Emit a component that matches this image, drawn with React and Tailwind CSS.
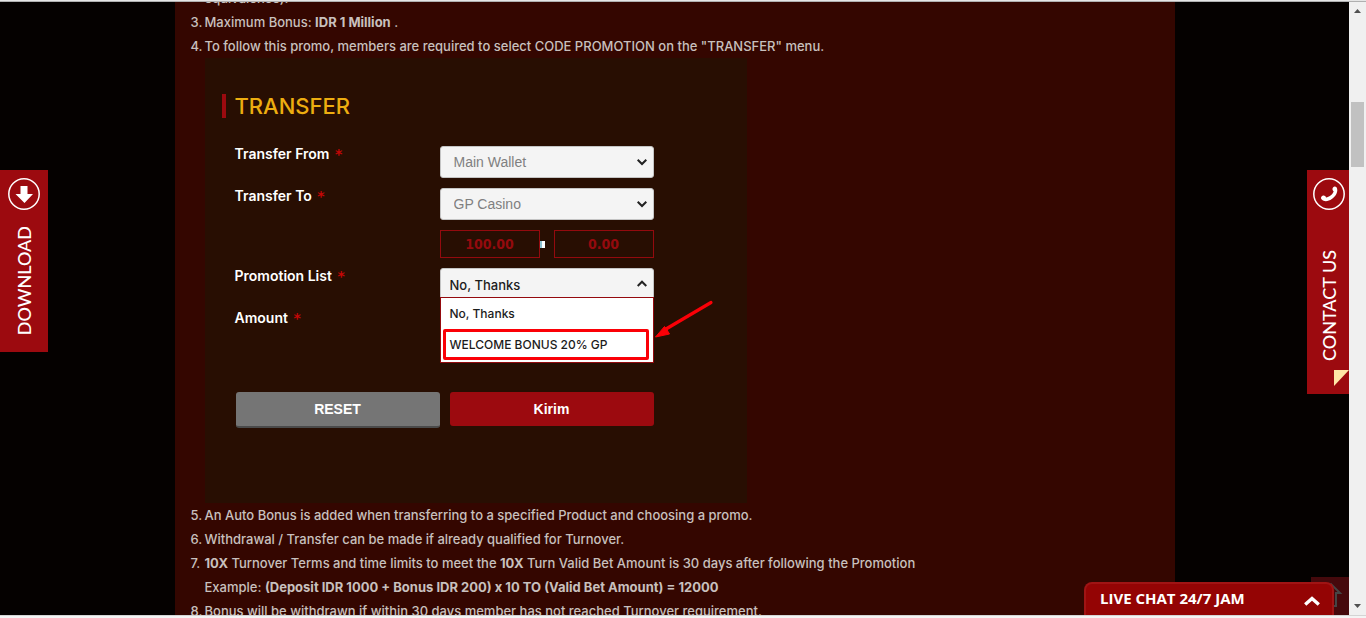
import React, { useState } from 'react';
import clsx from 'clsx';

const transferFields = [
    { id: 'transfer-from', label: 'Transfer From', value: 'Main Wallet' },
    { id: 'transfer-to', label: 'Transfer To', value: 'GP Casino' }
];

const promotions = ['No, Thanks', 'WELCOME BONUS 20% GP'];

function Chevron({ up }) {
    return (
        <svg className="pointer-events-none absolute right-[7px] top-[12px] h-2 w-2.5" viewBox="0 0 10 8" fill="none" stroke="#222" strokeWidth="2" aria-hidden="true">
            <path d={up ? 'M0.7 6 L5 1.7 L9.3 6' : 'M0.7 1.7 L5 6 L9.3 1.7'} />
        </svg>
    );
}

function Required() {
    return <span className="ml-0.5 font-['DejaVu_Sans',sans-serif] font-bold text-[#c40606]">*</span>;
}

function FieldLabel({ htmlFor, children }) {
    return (
        <label htmlFor={htmlFor} className="text-sm leading-4 font-semibold text-white">
            {children} <Required />
        </label>
    );
}

function Term({ number, children }) {
    return (
        <li className="flex">
            <span className="w-3.5 shrink-0 whitespace-nowrap">{number}.</span>
            <div className="min-w-0 flex-1">{children}</div>
        </li>
    );
}

function TransferForm() {
    const [promo, setPromo] = useState(promotions[0]);

    return (
        <form className="h-[445px] w-full max-w-[542px] bg-[#280e02] pl-[17px] pt-9" onSubmit={(e) => e.preventDefault()}>
            <h2 className="border-l-4 border-[#9c0a0f] pl-[9px] text-[22px] leading-6 font-medium text-[#edad10]">TRANSFER</h2>

            <div className="ml-[13px] mt-7 grid grid-cols-[205px_214px] gap-y-2.5">
                {transferFields.map((field) => (
                    <React.Fragment key={field.id}>
                        <FieldLabel htmlFor={field.id}>{field.label}</FieldLabel>
                        <div className="relative h-8">
                            <select
                                id={field.id}
                                className="h-8 w-full appearance-none rounded-[3px] border border-[#c4c4c4] bg-[#f4f4f4] pl-[13px] font-['Liberation_Sans',Arial,sans-serif] text-sm text-[#808080]"
                            >
                                <option>{field.value}</option>
                            </select>
                            <Chevron />
                        </div>
                    </React.Fragment>
                ))}

                {/* wallet balances */}
                <div className="col-start-2 flex h-7 items-center font-['DejaVu_Sans_Condensed','DejaVu_Sans',Verdana,sans-serif] text-sm font-bold text-[#940a0e]">
                    <output className="flex h-7 w-[100px] items-center justify-center border border-[#940a0e]">100.00</output>
                    <span className="mr-[9px] h-[7px] w-[5px] border-l-2 border-[#8cc0d0] bg-white"></span>
                    <output className="flex h-7 w-[100px] items-center justify-center border border-[#940a0e]">0.00</output>
                </div>

                <FieldLabel htmlFor="promotion">Promotion List</FieldLabel>
                <div className="relative h-8">
                    <select
                        id="promotion"
                        value={promo}
                        onChange={(e) => setPromo(e.target.value)}
                        className="h-8 w-full appearance-none rounded-t-[3px] border border-[#c4c4c4] bg-[#f4f4f4] pl-[9px] pt-0.5 text-[13px] text-[#1c1c1c]"
                    >
                        {promotions.map((name) => <option key={name}>{name}</option>)}
                    </select>
                    <Chevron up />
                    <ul role="listbox" aria-label="Promotion List" className="absolute inset-x-0 top-[29px] z-10 border border-[#940a0e] bg-white text-xs text-[#1c1c1c]">
                        {promotions.map((name, i) => (
                            <li
                                key={name}
                                role="option"
                                aria-selected={name === promo}
                                onClick={() => setPromo(name)}
                                className={clsx(
                                    'flex cursor-pointer items-center',
                                    i === 0 ? 'h-[31px] px-[9px]' : 'mb-0.5 ml-0.5 mr-1 h-[31px] rounded-xs border-[3px] border-[#fb0007] px-1'
                                )}
                            >
                                {name}
                            </li>
                        ))}
                    </ul>
                    {/* pointer to the bonus option */}
                    <svg className="absolute left-[214px] top-8 h-10 w-[60px]" viewBox="0 0 60 40" aria-hidden="true">
                        <path d="M57 2.5 L12 29" stroke="#fb0007" strokeWidth="3.2" strokeLinecap="round" />
                        <path d="M1.5 37 L10.5 26.5 L12.5 29 L15.5 34 Z" fill="#fb0007" stroke="#fb0007" strokeLinejoin="round" />
                    </svg>
                </div>

                <div className="h-8 leading-4">
                    <span className="text-sm leading-4 font-semibold text-white">
                        Amount <Required />
                    </span>
                </div>
            </div>

            <div className="ml-3.5 mt-[50px] flex gap-2.5 font-['Liberation_Sans',Arial,sans-serif] text-sm font-bold text-white">
                <button type="reset" className="h-9 w-[204px] rounded-[3px] border-b-2 border-[#4a4a4a] bg-[#757575]">RESET</button>
                <button type="submit" className="h-[34px] w-[204px] rounded-[3px] bg-[#9c0a0f]">Kirim</button>
            </div>
        </form>
    );
}

export default function App() {
    return (
        <div className="flex h-screen flex-col overflow-hidden bg-[#f0f0f0] font-['Inter',sans-serif]">
            <div className="h-0.5 shrink-0 border-b border-[#b0b0b0] bg-[#e6e6e6]"></div>

            <div className="flex min-h-0 flex-1">
                <div className="relative min-w-0 flex-1 overflow-hidden bg-[#050100]">
                    <main className="mx-auto h-full max-w-[1000px] overflow-hidden bg-[#340600] px-4 text-[#c8c0be]">
                        <ol className="-mt-4 text-[13px] leading-6 font-medium">
                            <li className="pl-3.5">equivalence).</li>
                            <Term number={3}>Maximum Bonus: <b>IDR 1 Million</b> .</Term>
                            <Term number={4}>
                                To follow this promo, members are required to select CODE PROMOTION on the "TRANSFER" menu.
                                <TransferForm />
                            </Term>
                            <Term number={5}>An Auto Bonus is added when transferring to a specified Product and choosing a promo.</Term>
                            <Term number={6}>Withdrawal / Transfer can be made if already qualified for Turnover.</Term>
                            <Term number={7}>
                                <p><b>10X</b> Turnover Terms and time limits to meet the <b>10X</b> Turn Valid Bet Amount is 30 days after following the Promotion</p>
                                <p>Example: <b>(Deposit IDR 1000 + Bonus IDR 200) x 10 TO (Valid Bet Amount) = 12000</b></p>
                            </Term>
                            <Term number={8}>Bonus will be withdrawn if within 30 days member has not reached Turnover requirement.</Term>
                        </ol>
                    </main>

                    {/* side tabs */}
                    <a href="#download" className="absolute left-0 top-[168px] flex h-[182px] w-12 flex-col items-center bg-[#9c0a0f] pt-2 text-white">
                        <svg className="size-8" viewBox="0 0 32 32" aria-hidden="true">
                            <circle cx="16" cy="16" r="15.2" fill="none" stroke="#fff" strokeWidth="1.5" />
                            <path d="M12.5 8 H19.5 V16 H25 L16.5 25 L7.5 16 H12.5 Z" fill="#fff" />
                        </svg>
                        <span className="mt-4 rotate-180 font-['Lato',sans-serif] text-lg leading-6 font-medium [writing-mode:vertical-rl]">DOWNLOAD</span>
                    </a>
                    <a href="#contact" className="absolute right-0 top-[168px] flex h-56 w-[42px] flex-col items-center bg-[#9c0a0f] pl-0.5 pt-2 text-white">
                        <svg className="size-8" viewBox="0 0 32 32" aria-hidden="true">
                            <circle cx="16" cy="16" r="15.2" fill="none" stroke="#fff" strokeWidth="1.5" />
                            <path d="M20.2 9.2 C21.2 8.1 22.7 8.4 23.7 9.4 C25.7 13.5 22.5 18.5 18.8 21 C15.5 23.3 11.5 24.2 8.7 21.6 C7.5 20.3 7.9 18.6 9.5 17.8 C11 17.1 12.3 17.8 13.1 19.4 C16 19.3 19.5 16.5 20.7 13.5 C19.3 12.2 19 10.6 20.2 9.2 Z" fill="#fff" />
                        </svg>
                        <span className="mt-10 rotate-180 font-['Lato',sans-serif] text-lg leading-6 font-medium [writing-mode:vertical-rl]">CONTACT US</span>
                        <svg className="absolute right-0 top-[200px] h-4 w-[15px]" viewBox="0 0 15 16" aria-hidden="true">
                            <path d="M0 0 H15 L0 16 Z" fill="#ffe6a6" />
                        </svg>
                    </a>

                    {/* back to top, half hidden by the chat bar */}
                    <a href="#top" aria-label="Back to top" className="absolute bottom-0 right-0 h-[38px] w-[38px] bg-[#45090c]">
                        <svg className="h-full w-full" viewBox="0 0 38 38" fill="none" stroke="#454545" strokeWidth="2" aria-hidden="true">
                            <path d="M17 30 V15 H11 L20 7 L29 16 H25 V29 H22" />
                        </svg>
                    </a>
                    <button type="button" className="absolute bottom-0 right-[15px] flex h-[33px] w-[250px] items-center justify-between rounded-t-lg border-2 border-b-0 border-[#a01414] bg-[#940404] pb-0.5 pl-3.5 pr-3 font-['Open_Sans',sans-serif] text-[15px] font-bold text-white">
                        LIVE CHAT 24/7 JAM
                        <svg className="mt-1 h-2.5 w-4" viewBox="0 0 16 10" fill="none" stroke="#fff" strokeWidth="3.4" aria-hidden="true">
                            <path d="M1.2 8.5 L8 2.5 L14.8 8.5" />
                        </svg>
                    </button>
                </div>

                {/* scrollbar */}
                <div className="flex w-[17px] shrink-0 flex-col items-center bg-[#f0f0f0] py-[7px]">
                    <svg className="h-1 w-[7px]" viewBox="0 0 7 4" aria-hidden="true"><path d="M3.5 0 L7 4 H0 Z" fill="#505050" /></svg>
                    <div className="mt-[89px] h-[65px] w-[13px] bg-[#c1c1c1]"></div>
                    <svg className="mt-auto h-1 w-[7px]" viewBox="0 0 7 4" aria-hidden="true"><path d="M0 0 H7 L3.5 4 Z" fill="#505050" /></svg>
                </div>
            </div>

            <div className="h-[3px] shrink-0 border-t border-[#d4d4d4] bg-[#f4f4f4]"></div>
        </div>
    );
}
